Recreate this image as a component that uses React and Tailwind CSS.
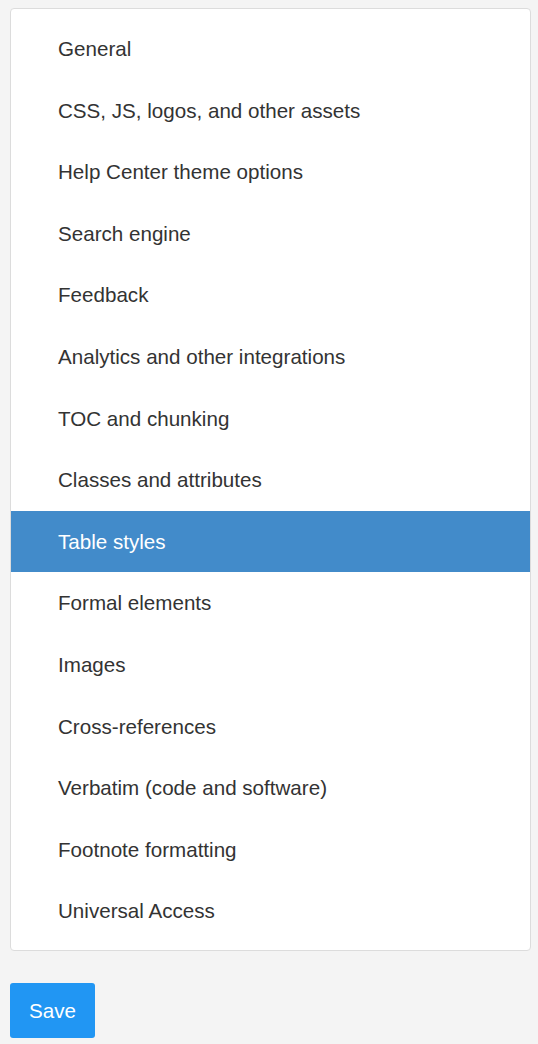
export default function App() {
  const items = [
    "General",
    "CSS, JS, logos, and other assets",
    "Help Center theme options",
    "Search engine",
    "Feedback",
    "Analytics and other integrations",
    "TOC and chunking",
    "Classes and attributes",
    "Table styles",
    "Formal elements",
    "Images",
    "Cross-references",
    "Verbatim (code and software)",
    "Footnote formatting",
    "Universal Access",
  ];
  return (
    <div
      className="min-h-[1044px] w-[538px] bg-[#f4f4f4] pt-[8px] px-[10px]"
      style={{ fontFamily: '"Liberation Sans", Arial, sans-serif' }}
    >
      <div className="bg-white border border-[#dcdcdc] rounded-[4px] pt-[9px] pb-[8.5px] w-[521px]">
        {items.map((t) => {
          const sel = t === "Table styles";
          return (
            <div
              key={t}
              className={
                "h-[61.6px] flex items-center pl-[47px] pt-[1px] text-[20.6px] leading-none " +
                (sel ? "bg-[#428bca] text-white" : "text-[#333333]")
              }
            >
              {t}
            </div>
          );
        })}
      </div>
      <button className="mt-[32px] w-[85px] h-[55px] pt-[1px] bg-[#2196f3] text-white text-[20.6px] rounded-[3px]">
        Save
      </button>
    </div>
  );
}
